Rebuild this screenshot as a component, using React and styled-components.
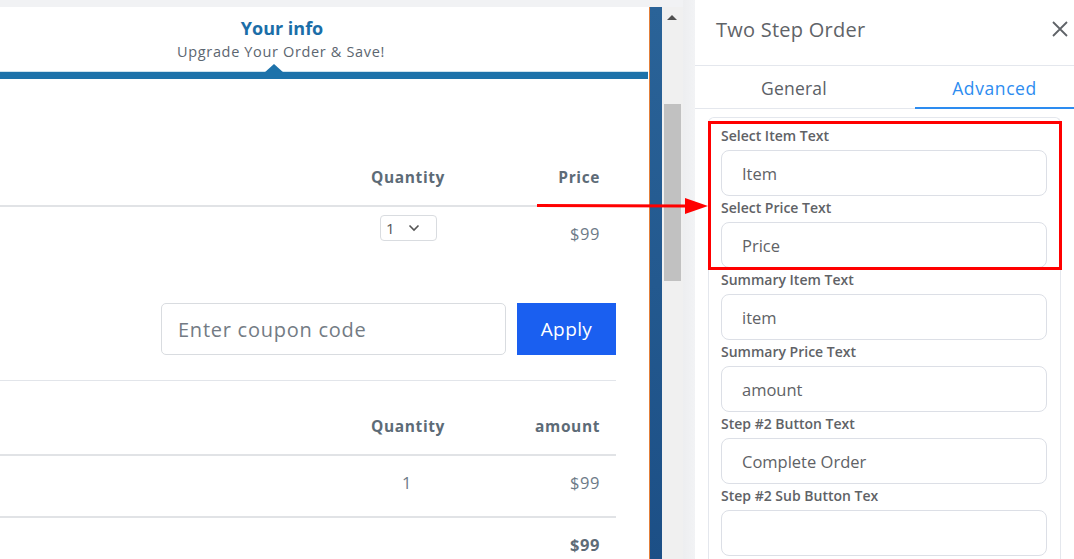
import React from "react";
import styled, { createGlobalStyle } from "styled-components";

const Global = createGlobalStyle`
  html, body { margin: 0; padding: 0; background: #f0f1f3; }
  body { width: 1074px; height: 559px; overflow: hidden; }
  * { box-sizing: border-box; }
`;

const Root = styled.div`
  position: relative;
  display: flex;
  width: 1074px;
  height: 559px;
  overflow: hidden;
  background: #eff0f2;
  font-family: "Open Sans", "Liberation Sans", sans-serif;
`;

const LeftArea = styled.div`
  display: flex;
  flex-direction: column;
  width: 683px;
  height: 559px;
`;

const TopStrip = styled.div`
  flex: none;
  height: 7px;
  background: #f1f2f4;
`;

const FrameRow = styled.div`
  flex: 1;
  min-height: 0;
  overflow: hidden;
  display: flex;
`;

const Page = styled.div`
  width: 649px;
  background: #fff;
  font-family: "Open Sans", "Liberation Sans", sans-serif;
  color: #5d6b77;
`;

const StepHeader = styled.div`
  position: relative;
  display: flex;
  flex-direction: column;
  align-items: center;
  padding: 9px 0 0 0;
  width: 648px;
  height: 72px;
  border-bottom: 7px solid #1d72aa;
  box-shadow: 0 -1px 0 #cfe3ef inset;
`;

const StepTitle = styled.div`
  margin-left: -84px;
  font-size: 18px;
  font-weight: 700;
  color: #1b6ea8;
  line-height: 24px;
`;

const StepSub = styled.div`
  margin-left: -86px;
  font-size: 14.5px;
  letter-spacing: 0.65px;
  color: #5c6670;
  line-height: 22px;
  margin-top: 1px;
`;

const Notch = styled.div`
  position: absolute;
  left: 264px;
  bottom: -1px;
  width: 0;
  height: 0;
  border-left: 10px solid transparent;
  border-right: 10px solid transparent;
  border-bottom: 9px solid #1d72aa;
`;

const Content = styled.div`
  width: 616px;
`;

const TableHead = styled.div`
  display: grid;
  grid-template-columns: 1fr 120px 155px;
  align-items: end;
  height: ${(p) => p.h}px;
  padding-bottom: ${(p) => p.pb}px;
  border-bottom: 2px solid #e1e3e6;
  font-weight: 700;
  font-size: 15.5px;
  color: #5d6b77;
`;

const HeadCell = styled.div`
  text-align: ${(p) => p.align || "left"};
  padding-right: ${(p) => p.pr || 0}px;
  letter-spacing: 0.6px;
`;

const Row = styled.div`
  display: grid;
  grid-template-columns: 1fr 120px 155px;
  align-items: start;
  height: ${(p) => p.h}px;
  border-bottom: ${(p) => (p.border ? "2px solid #e1e3e6" : "none")};
  font-size: 16.5px;
  letter-spacing: 0.6px;
  line-height: 22px;
  color: #6d7a87;
`;

const Cell = styled.div`
  text-align: ${(p) => p.align || "left"};
  padding-right: ${(p) => p.pr || 0}px;
  font-weight: ${(p) => (p.bold ? 700 : 400)};
  color: ${(p) => (p.bold ? "#5d6b77" : "#6d7a87")};
  padding-top: ${(p) => p.pt || 0}px;
`;

const QtySelect = styled.div`
  display: inline-flex;
  align-items: center;
  gap: 13px;
  width: 57px;
  height: 26px;
  margin-left: 39px;
  padding: 0 0 0 5px;
  border: 1px solid #d9dce0;
  border-radius: 4px;
  font-size: 15px;
  letter-spacing: 0;
  color: #555;
`;

const CouponRow = styled.div`
  display: flex;
  justify-content: flex-end;
  gap: 11px;
  height: 119px;
  padding-top: 41px;
  border-bottom: 1px solid #e2e5ea;
`;

const CouponInput = styled.div`
  width: 345px;
  height: 52px;
  border: 1px solid #d9dce0;
  border-radius: 5px;
  display: flex;
  align-items: center;
  padding-left: 16px;
  font-size: 20px;
  letter-spacing: 0.75px;
  color: #737b84;
`;

const ApplyButton = styled.div`
  width: 99px;
  height: 52px;
  background: #1a5ff0;
  color: #fff;
  display: flex;
  align-items: center;
  justify-content: center;
  font-size: 19px;
  letter-spacing: 0.4px;
`;

const BlueStrip = styled.div`
  width: 13px;
  background: linear-gradient(#2a6398, #1c4f86);
  border-left: 1px solid #e27f3a;
`;

const ScrollTrack = styled.div`
  position: relative;
  width: 21px;
  background: #f0f0f0;
`;

const ScrollArrow = styled.div`
  position: absolute;
  left: 5px;
  top: 8px;
  width: 0;
  height: 0;
  border-left: 5px solid transparent;
  border-right: 5px solid transparent;
  border-bottom: 5px solid #505050;
`;

const ScrollThumb = styled.div`
  position: absolute;
  left: 2px;
  top: 97px;
  width: 17px;
  height: 177px;
  background: #c1c1c1;
`;

const Gutter = styled.div`
  width: 12px;
  background: linear-gradient(90deg, #edeef0, #f2f3f5);
`;

const Panel = styled.div`
  flex: 1;
  background: #fff;
  display: flex;
  flex-direction: column;
  font-family: "Open Sans", "Liberation Sans", sans-serif;
`;

const PanelHeader = styled.div`
  height: 66px;
  display: flex;
  align-items: center;
  justify-content: space-between;
  padding: 0 2px 6px 21px;
  border-bottom: 1px solid #e4e7ed;
`;

const PanelTitle = styled.div`
  font-size: 20px;
  letter-spacing: 0.25px;
  color: #5f6368;
`;

const CloseBtn = styled.div`
  width: 24px;
  height: 24px;
  display: flex;
  align-items: center;
  justify-content: center;
  margin-top: -2px;
`;

const Tabs = styled.div`
  display: flex;
  height: 43px;
  border-bottom: 1px solid #e4e7ed;
`;

const Tab = styled.div`
  width: ${(p) => (p.w ? `${p.w}px` : "auto")};
  flex: ${(p) => (p.w ? "none" : 1)};
  margin-left: ${(p) => p.ml || 0}px;
  display: flex;
  align-items: center;
  justify-content: center;
  font-size: 17.5px;
  letter-spacing: ${(p) => (p.active ? 0.6 : 0.2)}px;
  color: ${(p) => (p.active ? "#2d8cf0" : "#5b6066")};
  border-bottom: 2px solid ${(p) => (p.active ? "#2d8cf0" : "transparent")};
  margin-bottom: -1px;
  padding-top: 3px;
`;

const Body = styled.div`
  flex: 1;
  padding: 8px 13px 0 13px;
  overflow: hidden;
`;

const Card = styled.div`
  border: 1px solid #e4e7ed;
  border-bottom: none;
  border-radius: 6px 6px 0 0;
  padding: 6px 13px 0 12px;
  height: 500px;
`;

const Field = styled.div`
  display: flex;
  flex-direction: column;
`;

const Label = styled.div`
  font-size: 14px;
  font-weight: 600;
  color: #606266;
  line-height: 20px;
  height: 26px;
  padding-top: 2px;
  white-space: nowrap;
`;

const Input = styled.div`
  height: 46px;
  border: 1px solid #dcdfe6;
  border-radius: 8px;
  display: flex;
  align-items: center;
  padding-left: 20px;
  font-size: 16.5px;
  color: #606266;
`;

const Highlight = styled.div`
  position: absolute;
  left: 708px;
  top: 121px;
  width: 354px;
  height: 149px;
  border: 3px solid #f00;
  pointer-events: none;
`;

const Arrow = styled.svg`
  position: absolute;
  left: 535px;
  top: 195px;
`;

const fields = [
  ["Select Item Text", "Item"],
  ["Select Price Text", "Price"],
  ["Summary Item Text", "item"],
  ["Summary Price Text", "amount"],
  ["Step #2 Button Text", "Complete Order"],
  ["Step #2 Sub Button Tex", ""],
];

export default function App() {
  return (
    <>
      <Global />
      <Root>
        <LeftArea>
          <TopStrip />
          <FrameRow>
            <Page>
              <StepHeader>
                <StepTitle>Your info</StepTitle>
                <StepSub>Upgrade Your Order &amp; Save!</StepSub>
                <Notch />
              </StepHeader>
              <Content>
                <TableHead h={128} pb={17}>
                  <HeadCell />
                  <HeadCell align="right" pr={16}>Quantity</HeadCell>
                  <HeadCell align="right" pr={16}>Price</HeadCell>
                </TableHead>
                <Row h={55}>
                  <Cell />
                  <Cell pt={8}>
                    <QtySelect>
                      1
                      <svg width="12" height="8" viewBox="0 0 12 8">
                        <path d="M1.5 1.5 L6 6 L10.5 1.5" fill="none" stroke="#555" strokeWidth="1.6" />
                      </svg>
                    </QtySelect>
                  </Cell>
                  <Cell align="right" pr={16} pt={16}>$99</Cell>
                </Row>
                <CouponRow>
                  <CouponInput>Enter coupon code</CouponInput>
                  <ApplyButton>Apply</ApplyButton>
                </CouponRow>
                <TableHead h={75} pb={17}>
                  <HeadCell />
                  <HeadCell align="right" pr={16}>Quantity</HeadCell>
                  <HeadCell align="right" pr={16}>amount</HeadCell>
                </TableHead>
                <Row h={62} border>
                  <Cell />
                  <Cell align="right" pr={49} pt={16}>1</Cell>
                  <Cell align="right" pr={16} pt={16}>$99</Cell>
                </Row>
                <Row h={40}>
                  <Cell />
                  <Cell />
                  <Cell align="right" pr={16} pt={16} bold>$99</Cell>
                </Row>
              </Content>
            </Page>
            <BlueStrip />
            <ScrollTrack>
              <ScrollArrow />
              <ScrollThumb />
            </ScrollTrack>
          </FrameRow>
        </LeftArea>
        <Gutter />
        <Panel>
          <PanelHeader>
            <PanelTitle>Two Step Order</PanelTitle>
            <CloseBtn>
              <svg width="18" height="18" viewBox="0 0 18 18">
                <path d="M2 2 L16 16 M16 2 L2 16" stroke="#5f6368" strokeWidth="1.8" fill="none" />
              </svg>
            </CloseBtn>
          </PanelHeader>
          <Tabs>
            <Tab w={198}>General</Tab>
            <Tab ml={22} active>Advanced</Tab>
          </Tabs>
          <Body>
            <Card>
              {fields.map(([label, value]) => (
                <Field key={label}>
                  <Label>{label}</Label>
                  <Input>{value}</Input>
                </Field>
              ))}
            </Card>
          </Body>
        </Panel>
        <Highlight />
        <Arrow width="176" height="22" viewBox="0 0 176 22">
          <path d="M2 10.5 L152 11" stroke="#f00" strokeWidth="3" fill="none" />
          <path d="M150 3 L173 11 L150 19 Z" fill="#f00" />
        </Arrow>
      </Root>
    </>
  );
}
